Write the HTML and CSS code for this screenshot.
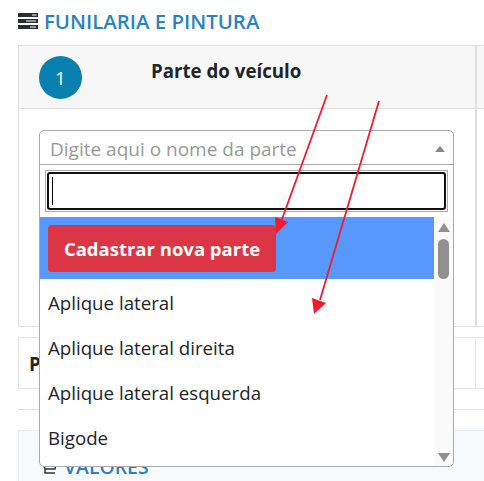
FILE: index.html
```html
<!DOCTYPE html>
<html lang="pt">
<head>
<meta charset="utf-8">
<title>Funilaria e pintura</title>
<link rel="stylesheet" href="styles.css">
</head>
<body>
<div class="page">
  <h2 class="title">
    <svg class="title-icon" viewBox="0 0 20 16" aria-hidden="true">
      <path fill="#2b2b33" d="M0 0h20v4H0zM0 6h20v4H0zM0 12h20v4H0z"/>
      <path fill="#fff" d="M14 1.500h4.500v1H14zM8 7.500h10v1H8zM12 13.500h6v1h-6z"/>
    </svg>
    <span>FUNILARIA E PINTURA</span>
  </h2>

  <section class="wizard">
    <div class="step-main">
      <div class="step-head">
        <span class="badge">1</span>
        <strong class="step-name">Parte do veículo</strong>
      </div>
      <div class="step-body"></div>
    </div>
    <div class="step-side"></div>
  </section>

  <section class="wizard-two">
    <strong class="p-letter">P</strong>
    <div class="step-side-two"></div>
  </section>

  <hr class="rule">

  <section class="values">
    <svg class="cart" viewBox="0 0 16 16" aria-hidden="true"><path fill="none" stroke="#333" stroke-width="1.500" d="M1 2h13l-1 6H3zM3 8v4h10"/></svg>
    <span>VALORES</span>
  </section>
</div>

<div class="dropdown">
  <div class="select-box">
    <span class="placeholder">Digite aqui o nome da parte</span>
    <span class="caret"></span>
  </div>
  <div class="search-wrap">
    <div class="search"><span class="text-cursor"></span></div>
  </div>
  <div class="list">
    <div class="options">
      <div class="option-active"><button class="add-btn">Cadastrar nova parte</button></div>
      <div class="option">Aplique lateral</div>
      <div class="option">Aplique lateral direita</div>
      <div class="option">Aplique lateral esquerda</div>
      <div class="option">Bigode</div>
    </div>
    <div class="scrollbar">
      <span class="sb-up"></span>
      <span class="sb-thumb"></span>
      <span class="sb-down"></span>
    </div>
  </div>
</div>

<svg class="arrows" viewBox="0 0 484 481" aria-hidden="true">
  <g fill="none" stroke="#ee1c2e" stroke-width="1.800">
    <path d="M327 95L281 222"/>
    <path d="M379 101L320 300"/>
  </g>
  <path fill="#ee1c2e" d="M275 217L288 222L276 234Z"/>
  <path fill="#ee1c2e" d="M312 298L326 303L314 314Z"/>
</svg>
</body>
</html>
```
FILE: styles.css
```css
* { box-sizing: border-box; }
html, body { margin: 0; height: 481px; overflow: hidden; background: #fff; }
body { font-family: "Open Sans", "Noto Sans", sans-serif; color: #212529; position: relative; }

.page { padding: 7px 0 0 18px; width: 484px; }

.title { margin: 0; height: 27px; display: flex; align-items: center; gap: 6px; font-size: 20.400px; font-weight: 600; letter-spacing: 0; color: #2c82bd; white-space: nowrap; }
.title-icon { width: 20px; height: 16px; flex: none; }

.wizard { margin-top: 11px; height: 282px; display: flex; border: 1px solid #dfdfdf; border-right: 0; }
.step-main { width: 456px; flex: none; display: flex; flex-direction: column; }
.step-head { height: 63px; background: #f7f7f7; border-bottom: 1px solid #dfdfdf; display: flex; padding: 10px 0 0 20px; }
.badge { width: 43px; height: 43px; border-radius: 50%; background: #0a80b0; color: #fff; font-size: 18px; display: flex; align-items: center; justify-content: center; }
.step-name { margin-left: 69px; font-size: 18.700px; line-height: 24px; font-weight: 700; color: #212529; position: relative; top: 3px; }
.step-side { flex: 1; border-left: 2px solid #dfdfdf; border-top: 0; background: linear-gradient(#f7f7f7 62px, #dfdfdf 62px, #dfdfdf 63px, #fff 63px); }

.wizard-two { margin-top: 10px; height: 52px; display: flex; align-items: center; border: 1px solid #e6e6e6; border-right: 0; padding-left: 10px; position: relative; }
.p-letter { font-size: 18.700px; }
.step-side-two { position: absolute; left: 456px; top: 0; bottom: 0; width: 1px; background: #e6e6e6; }

.rule { margin: 20px 0 20px; border: 0; border-top: 1px solid #dfdfdf; height: 0; }

.values { height: 60px; background: #f8f9fa; border: 1px solid #e9ecef; border-right: 0; border-bottom: 0; display: flex; align-items: flex-start; gap: 6px; padding: 23px 0 0 24px; font-size: 19.400px; line-height: 26px; font-weight: 600; color: #2c82bd; }
.cart { width: 16px; height: 16px; margin-top: 7px; margin-left: -1px; }

.dropdown { position: absolute; left: 39px; top: 130px; width: 415px; height: 337px; background: #fff; border: 1px solid #aaa; border-radius: 5px; display: flex; flex-direction: column; }
.select-box { height: 34px; flex: none; border-bottom: 1px solid #aaa; display: flex; align-items: center; justify-content: space-between; padding: 2px 8px 0 10px; }
.placeholder { font-size: 19px; line-height: 24px; color: #999; }
.caret { width: 0; height: 0; border-left: 5px solid transparent; border-right: 5px solid transparent; border-bottom: 6px solid #888; }
.search-wrap { padding: 5px 5px 5px; flex: none; }
.search { height: 42px; border: 1px solid #aaa; padding: 1px; position: relative; }
.search::before { content: ""; position: absolute; inset: 1px; border: 2px solid #101010; border-radius: 3px; }
.text-cursor { position: absolute; left: 6px; top: 6px; width: 1px; height: 28px; background: #000; }

.list { flex: 1; min-height: 0; display: flex; overflow: hidden; border-radius: 0 0 5px 5px; }
.options { flex: 1; min-width: 0; }
.option-active { height: 62px; background: #5897fb; padding: 8px; }
.add-btn { display: block; width: 228px; height: 47px; border: 0; border-radius: 4px; background: #dc3545; color: #fff; font: 700 18.500px "Open Sans", "Noto Sans", sans-serif; padding: 0; }
.option { height: 45px; padding-left: 8px; font-size: 18.700px; line-height: 48px; color: #212529; }

.scrollbar { width: 19px; flex: none; background: #fafafa; position: relative; display: flex; flex-direction: column; align-items: center; }
.sb-up { width: 0; height: 0; margin-top: 6px; border-left: 6.500px solid transparent; border-right: 6.500px solid transparent; border-bottom: 9px solid #909090; }
.sb-thumb { width: 11px; height: 40px; margin-top: 7px; border-radius: 6px; background: #909090; }
.sb-down { width: 0; height: 0; margin-top: auto; margin-bottom: 4px; border-left: 6.500px solid transparent; border-right: 6.500px solid transparent; border-top: 9px solid #909090; }

.arrows { position: absolute; left: 0; top: 0; width: 484px; height: 481px; pointer-events: none; }
```
